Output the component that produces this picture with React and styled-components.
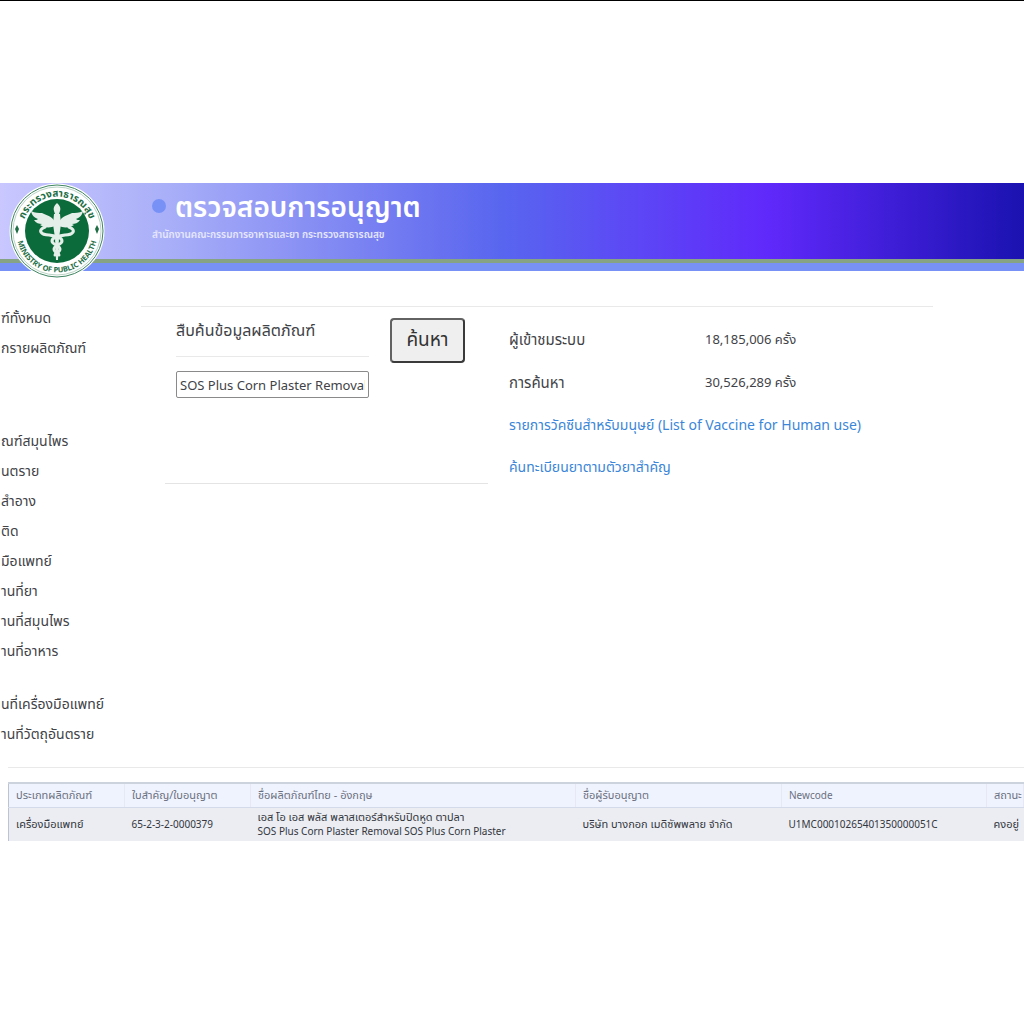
import { useState } from 'react';
import styled, { createGlobalStyle } from 'styled-components';

const productLinks = ['ฑ์ทั้งหมด', 'กรายผลิตภัณฑ์'];

const categoryLinks = [
  'ณฑ์สมุนไพร',
  'นตราย',
  'สำอาง',
  'ติด',
  'มือแพทย์',
  'านที่ยา',
  'านที่สมุนไพร',
  'านที่อาหาร',
];

const placeLinks = ['นที่เครื่องมือแพทย์', 'านที่วัตถุอันตราย'];

const stats = [
  { label: 'ผู้เข้าชมระบบ', value: '18,185,006 ครั้ง' },
  { label: 'การค้นหา', value: '30,526,289 ครั้ง' },
];

const results = [
  {
    type: 'เครื่องมือแพทย์',
    license: '65-2-3-2-0000379',
    nameTh: 'เอส โอ เอส พลัส พลาสเตอร์สำหรับปิดหูด ตาปลา',
    nameEn: 'SOS Plus Corn Plaster Removal SOS Plus Corn Plaster',
    licensee: 'บริษัท บางกอก เมดิซัพพลาย จำกัด',
    newcode: 'U1MC00010265401350000051C',
    status: 'คงอยู่',
  },
];

function Logo() {
  return (
    <Emblem viewBox="0 0 96 96" role="img" aria-label="Ministry of Public Health">
      <defs>
        <path id="ring-top" d="M13.5 52a34.7 34.7 0 1 1 69 0" />
        <path id="ring-bottom" d="M7.5 46a40.6 40.6 0 1 0 81 0" />
      </defs>
      <circle cx="48" cy="48" r="47.5" fill="#fff" />
      <circle cx="48" cy="48" r="46" fill="none" stroke="#3d8560" strokeWidth="1" />
      <circle cx="48" cy="48" r="44" fill="none" stroke="#b9d3c5" strokeWidth="1" />
      <circle cx="48" cy="48" r="32" fill="#0b6b3b" />
      <g fill="#1d6e45" fontWeight="700" textAnchor="middle">
        <text fontSize="10">
          <textPath href="#ring-top" startOffset="50%">กระทรวงสาธารณสุข</textPath>
        </text>
        <text fontSize="7.4">
          <textPath href="#ring-bottom" startOffset="50%">MINISTRY OF PUBLIC HEALTH</textPath>
        </text>
      </g>
      <path d="M8 42l2 4-2 5-2-5zM88 42l2 4-2 5-2-5z" fill="#1d6e45" />
      <g fill="#e3efe8">
        <path d="M48 20c3 3 4 5 3 8l-1 3h-4l-1-3c-1-3 0-5 3-8z" />
        <path d="M45 31h6l1 10-2 14-1 22h-2l-1-22-2-14z" />
        <path d="M46 39c-3-6-9-7-13-9-3 0-7 0-11-2 1 5 4 7 7 8-1 1-2 1-4 1 2 3 5 4 8 4l-2 1c4 3 11 3 15 1z" />
        <path d="M50 39c3-6 9-7 13-9 3 0 7 0 11-2-1 5-4 7-7 8 1 1 2 1 4 1-2 3-5 4-8 4l2 1c-4 3-11 3-15 1z" />
      </g>
      <g fill="none" stroke="#e3efe8" strokeWidth="3" strokeLinecap="round">
        <path d="M36 44c-8 3-4 8 4 8 7 1 13 2 13 6s-8 4-8 8 5 3 5 6" />
        <path d="M60 44c8 3 4 8-4 8-7 1-13 2-13 6s8 4 8 8-5 3-5 6" />
      </g>
    </Emblem>
  );
}

function SideLinks({ items }) {
  return (
    <LinkList>
      {items.map(item => (
        <li key={item}>
          <SideLink href="#">{item}</SideLink>
        </li>
      ))}
    </LinkList>
  );
}

export default function App() {
  const [query, setQuery] = useState('SOS Plus Corn Plaster Removal');

  return (
    <Page>
      <GlobalStyle />
      <Header>
        <Logo />
        <Brand>
          <Title>
            <Dot />
            ตรวจสอบการอนุญาต
          </Title>
          <Subtitle>สำนักงานคณะกรรมการอาหารและยา กระทรวงสาธารณสุข</Subtitle>
        </Brand>
      </Header>

      <Content>
        <Sidebar>
          <SideLinks items={productLinks} />
          <SideLinks items={categoryLinks} />
          <SideLinks items={placeLinks} />
        </Sidebar>
        <Main>
          <SearchForm onSubmit={e => e.preventDefault()}>
            <Field>
              <FieldLabel htmlFor="query">สืบค้นข้อมูลผลิตภัณฑ์</FieldLabel>
              <SearchInput id="query" type="text" value={query} onChange={e => setQuery(e.target.value)} />
            </Field>
            <SearchButton type="submit">ค้นหา</SearchButton>
          </SearchForm>
          <Info>
            {stats.map(stat => (
              <InfoRow key={stat.label}>
                <InfoLabel>{stat.label}</InfoLabel>
                <span>{stat.value}</span>
              </InfoRow>
            ))}
            <InfoLink href="#">รายการวัคซีนสำหรับมนุษย์ (List of Vaccine for Human use)</InfoLink>
            <InfoLink href="#">ค้นทะเบียนยาตามตัวยาสำคัญ</InfoLink>
          </Info>
        </Main>
      </Content>

      <Results>
        <Table>
          <colgroup>
            <Col $width={116} />
            <Col $width={126} />
            <Col />
            <Col $width={206} />
            <Col $width={205} />
            <Col $width={37} />
          </colgroup>
          <thead>
            <tr>
              <Th>ประเภทผลิตภัณฑ์</Th>
              <Th>ใบสำคัญ/ใบอนุญาต</Th>
              <Th>ชื่อผลิตภัณฑ์ไทย - อังกฤษ</Th>
              <Th>ชื่อผู้รับอนุญาต</Th>
              <Th $latin>Newcode</Th>
              <Th>สถานะ</Th>
            </tr>
          </thead>
          <tbody>
            {results.map(row => (
              <tr key={row.newcode}>
                <Td>{row.type}</Td>
                <Td $latin>{row.license}</Td>
                <Td>
                  {row.nameTh}
                  <EnglishName>{row.nameEn}</EnglishName>
                </Td>
                <Td>{row.licensee}</Td>
                <Td $latin>{row.newcode}</Td>
                <Td>{row.status}</Td>
              </tr>
            ))}
          </tbody>
        </Table>
      </Results>
    </Page>
  );
}

const GlobalStyle = createGlobalStyle`
  * {
    box-sizing: border-box;
  }
  body {
    margin: 0;
    background: #fff;
    color: #3f4347;
    font-family: "Noto Sans", "Noto Sans Thai", sans-serif;
    font-size: 13px;
  }
`;

const Page = styled.div`
  min-height: 100vh;
  border-top: 1px solid #000;
  padding-top: 182px;
  overflow-x: hidden;
`;

const Header = styled.header`
  display: flex;
  align-items: flex-start;
  height: 88px;
  padding-left: 9px;
  border-bottom: 8px solid #7891f7;
  background:
    linear-gradient(#86a386, #86a386) bottom / 100% 4px no-repeat,
    linear-gradient(90deg, #c9c7fe 0%, #aab0f8 16%, #6a73f0 42%, #5866ef 49%, #6029fb 75%, #1a12b0 100%);
`;

const Emblem = styled.svg`
  flex: none;
  width: 96px;
  height: 96px;
`;

const Brand = styled.div`
  margin-left: 47px;
  padding-top: 4px;
  color: #fff;
`;

const Title = styled.h1`
  display: flex;
  align-items: center;
  gap: 9px;
  margin: 0;
  font-size: 28px;
  font-weight: 600;
  line-height: 38px;
`;

const Dot = styled.span`
  width: 14px;
  height: 14px;
  border-radius: 50%;
  background: #7891f7;
`;

const Subtitle = styled.p`
  margin: 0;
  color: #e6e7fe;
  font-size: 10px;
  font-weight: 600;
  line-height: 18px;
`;

const Content = styled.div`
  display: grid;
  grid-template-columns: 141px 1fr;
  padding-top: 32px;
`;

const Sidebar = styled.nav`
  display: flex;
  flex-direction: column;
`;

const LinkList = styled.ul`
  margin: 0;
  padding: 0;
  list-style: none;

  &:nth-child(2) {
    margin: 63px 0 23px;
  }
`;

const SideLink = styled.a`
  display: block;
  padding-left: 1px;
  color: inherit;
  font-size: 14px;
  line-height: 30px;
  text-decoration: none;
  white-space: nowrap;
`;

const Main = styled.main`
  display: flex;
  align-items: flex-start;
  margin: 3px 91px 0 0;
  padding-left: 24px;
  border-top: 1px solid #e9e9e9;
`;

const SearchForm = styled.form`
  display: flex;
  align-items: flex-start;
  gap: 21px;
  width: 323px;
  min-height: 177px;
  padding: 11px 0 0 11px;
  border-bottom: 1px solid #e4e4e4;
`;

const Field = styled.div`
  width: 193px;
`;

const FieldLabel = styled.label`
  display: block;
  height: 39px;
  margin-bottom: 14px;
  border-bottom: 1px solid #e9e9e9;
  font-size: 16px;
  line-height: 24px;
`;

const SearchInput = styled.input`
  display: block;
  width: 100%;
  height: 27px;
  padding: 0 3px;
  border: 1px solid #8a8a8a;
  border-radius: 2px;
  background: #fff;
  color: inherit;
  font-family: inherit;
  font-size: 13px;
`;

const SearchButton = styled.button`
  width: 75px;
  height: 45px;
  padding: 0;
  border: 2px solid;
  border-color: #626262 #3a3a3a #3a3a3a #626262;
  border-radius: 4px;
  background: #efefef;
  color: #333;
  font-family: inherit;
  font-size: 19px;
`;

const Info = styled.section`
  flex: 1;
  margin-left: 21px;
  padding-top: 11px;
`;

const InfoRow = styled.div`
  display: grid;
  grid-template-columns: 196px 1fr;
  line-height: 43px;
`;

const InfoLabel = styled.span`
  font-size: 15px;
`;

const InfoLink = styled.a`
  display: block;
  color: #3b86d8;
  font-size: 14px;
  line-height: 42px;
  text-decoration: none;
`;

const Results = styled.section`
  margin: 18px 0 0 8px;
  padding-top: 14px;
  border-top: 1px solid #e9e9e9;
`;

const Table = styled.table`
  width: 100%;
  table-layout: fixed;
  border-collapse: collapse;
  border-top: 2px solid #cdd3dd;
  border-left: 1px solid #bcc3d2;
`;

const Col = styled.col`
  width: ${({ $width }) => ($width ? `${$width}px` : 'auto')};
`;

const Th = styled.th`
  height: 24px;
  padding: 0 0 0 7px;
  border-right: 1px solid #e6e9f3;
  border-bottom: 1px solid #d3daea;
  background: #eff3fe;
  color: #6b7080;
  font-size: ${({ $latin }) => ($latin ? '10px' : '11px')};
  font-weight: 400;
  text-align: left;
  white-space: nowrap;
  overflow: hidden;
`;

const Td = styled.td`
  height: 34px;
  padding: 0 0 0 7px;
  background: #ebedf3;
  color: #33363c;
  font-size: ${({ $latin }) => ($latin ? '10px' : '11px')};
  line-height: 14px;
  white-space: nowrap;
  overflow: hidden;
`;

const EnglishName = styled.div`
  font-size: 10px;
`;
